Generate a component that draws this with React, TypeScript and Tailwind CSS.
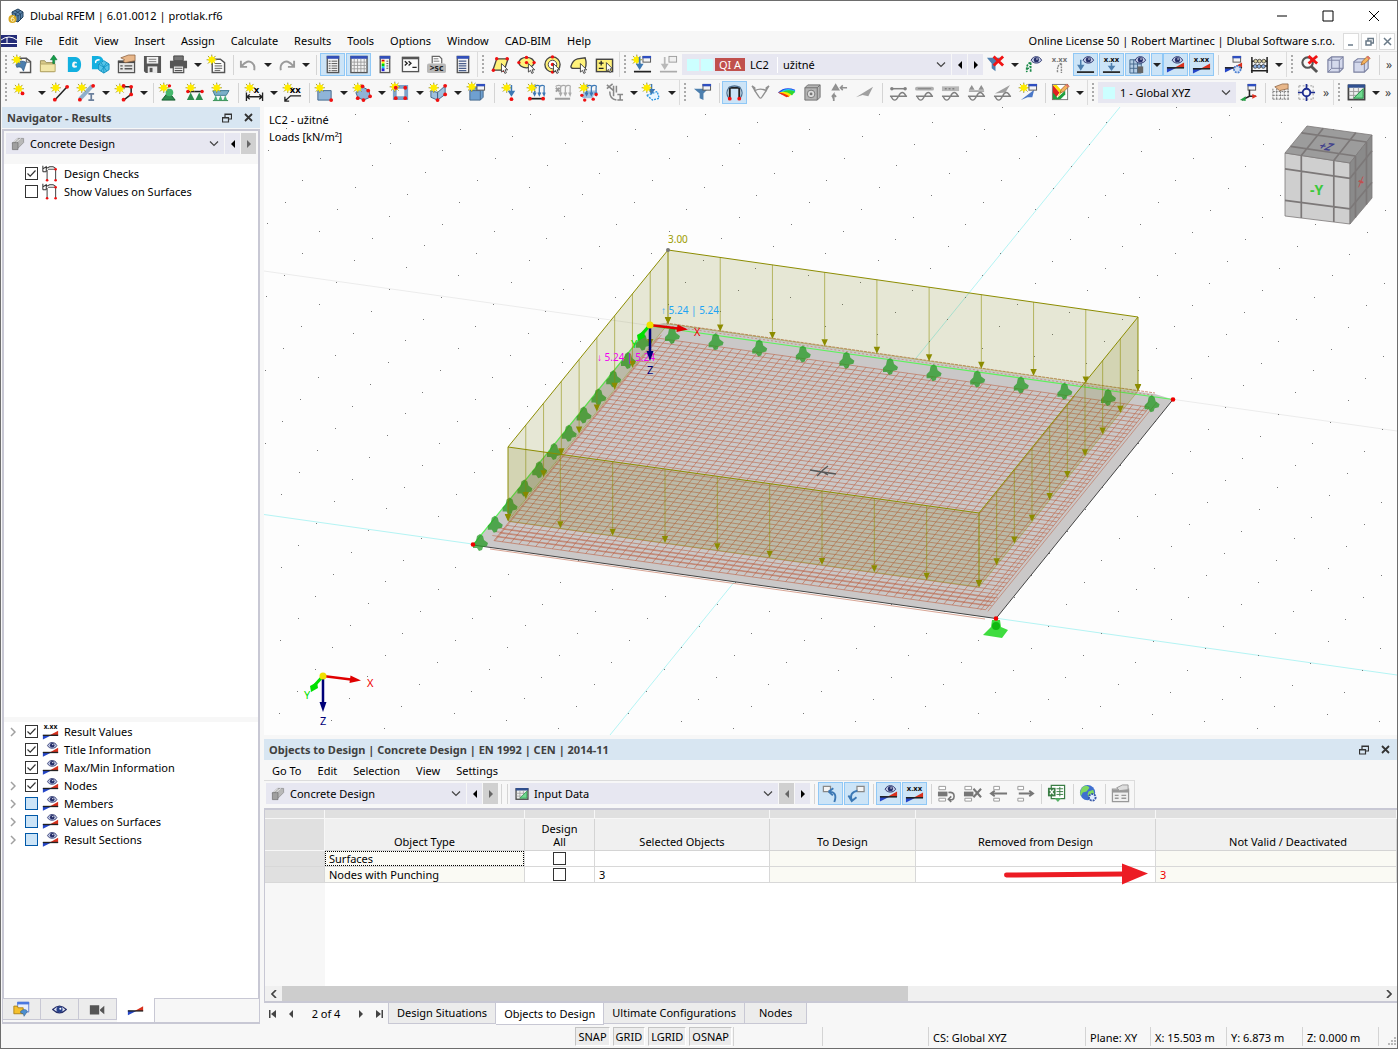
import { useState } from 'react';
import type { ReactNode } from 'react';

/* ---------- icon fragments, all on a 20x20 grid ---------- */

const Star = ({ x = 5, y = 5 }: { x?: number; y?: number }) => (
  <g transform={`translate(${x} ${y})`}>
    <path d="M0-5.4V5.4M-5.4 0H5.4M-4-4L4 4M-4 4L4-4" stroke="#8a8540" strokeWidth="1" />
    <path d="M0-4.6L1.3-2.6 3.6-3.4 2.8-1.2 4.8 0 2.8 1.2 3.6 3.4 1.3 2.6 0 4.6-1.3 2.6-3.6 3.4-2.8 1.2-4.8 0-2.8-1.2-3.6-3.4-1.3-2.6Z" fill="#ffec00" />
  </g>
);

const Dots = ({ at, r = 1.8 }: { at: number[][]; r?: number }) => (
  <g fill="#f01010">{at.map(([x, y], i) => <circle key={i} cx={x} cy={y} r={r} />)}</g>
);

const Eye = ({ x = 13, y = 5 }: { x?: number; y?: number }) => (
  <g transform={`translate(${x} ${y})`}>
    <path d="M-5.5 0.5C-3.5-4.5 3.5-4.5 5.5 .5 3.5 4.5-3.5 4.5-5.5 .5Z" fill="#c3cbe6" stroke="#27306a" strokeWidth="1" />
    <circle r="2.7" fill="#27306a" />
    <circle cx=".7" cy="-.8" r=".8" fill="#fff" />
  </g>
);

const Win = ({ x = 10, y = 1 }: { x?: number; y?: number }) => (
  <g>
    <rect x={x + 0.5} y={y + 0.5} width="8" height="6" fill="#f4f4f4" stroke="#555" />
    <rect x={x} y={y} width="9" height="2.5" fill="#2f4fc0" />
  </g>
);

const Digits = ({ color = '#111' }: { color?: string }) => (
  <text x="10" y="7" textAnchor="middle" fontSize="8" fontWeight="700" fontFamily="'Noto Sans', sans-serif" fill={color}>x.xx</text>
);

const Diagram = () => (
  <g>
    <path d="M1 18.5V13L11 13.5Z" fill="#2446c8" />
    <path d="M9 13.5L19 8V13.5Z" fill="#d8301c" />
    <path d="M1 13.5H19" stroke="#222" strokeWidth="1.6" />
  </g>
);

const Cursor = ({ x = 12, y = 9 }: { x?: number; y?: number }) => (
  <path transform={`translate(${x} ${y})`} d="M0 0V9L2.2 7.2 3.6 10.4 5.2 9.6 3.8 6.6H6.6Z" fill="#fff" stroke="#333" strokeWidth=".9" />
);

const Panel = ({ children, w = 12 }: { children?: ReactNode; w?: number }) => (
  <g>
    <rect x={10.5 - w / 2} y="1.5" width={w} height="17" fill="#f2f2f2" stroke="#555" strokeWidth="1.4" />
    <rect x={10 - w / 2} y="1" width={w + 1} height="3" fill="#3350b8" />
    {children}
  </g>
);

const Loads = ({ c = '#3c78b4' }: { c?: string }) => (
  <path d="M3 4Q3 2.5 6 2.5T8 5V12M8 5Q8 2.5 11 2.5T13 5V12M13 5Q13 2.5 16 2.5T18 5V12M6.5 10L8 13 9.5 10M11.5 10L13 13 14.5 10M16.5 10L18 13 19 10" fill="none" stroke={c} strokeWidth="1.3" />
);

const Pencil = () => (
  <g>
    <path d="M9.5 10.5L11 6.5 16.5 1 19 3.5 13.5 9Z" fill="#f4b35c" stroke="#a0612a" strokeWidth=".8" />
    <path d="M16.5 1L19 3.5 17.8 4.7 15.3 2.2Z" fill="#e07070" />
  </g>
);

const Wave = ({ y = 14 }: { y?: number }) => (
  <path d={`M1 ${y}H19M2 ${y}Q6 ${y + 8} 10 ${y}T18 ${y}`} fill="none" stroke="#808080" strokeWidth="1.5" />
);

const Chip = () => (
  <g>
    <path d="M2 2.5H9V6H2Z" fill="#fff" stroke="#999" />
    <path d="M1 8H11V13H1Z" fill="#777" />
    <path d="M2 15H9V18H2Z" fill="#fff" stroke="#999" />
  </g>
);

const icons: Record<string, ReactNode> = {
  new: <><path d="M5.5 3.5H14L18.5 7V18.5H7" fill="#fff" stroke="#555" strokeWidth="1.5" /><path d="M14 3V7.5H18.5" fill="none" stroke="#555" /><path d="M3 10Q9 4 14 8L11 17Q9 11 4 13Z" fill="#4d7fae" stroke="#2a5580" strokeWidth=".7" /><Star x={4} y={5} /></>,
  open: <><path d="M1.5 17.5V6H6L7.5 8H16V17.5Z" fill="#d9c98a" stroke="#9a8f5c" /><path d="M1.5 17.5V9.5H17V17.5Z" fill="#f2e6a8" stroke="#b5a768" /><path d="M14.5 9V5H12L15.5 0 19 5H16.5V9Z" fill="#11a04a" stroke="#0a6b30" strokeWidth=".6" /></>,
  cloud: <path d="M3 2H11C19 2 19 18 11 18H3ZM12.5 7.5Q8 5.5 7.5 10T12.5 13V11Q10 12 10 10T12.5 9Z" fill="#12b0e0" fillRule="evenodd" />,
  cloudModel: <><path d="M1 1H7C11 1 13 4 13 6L8 9V15H1Z" fill="#12b0e0" /><path d="M5 8.5Q4 5 9 5" stroke="#fff" strokeWidth="1.6" fill="none" /><path d="M8 9.5L13.5 6 19 9.5V15.5L13.5 19 8 15.5Z" fill="#56c4e8" stroke="#0b8fc0" /><path d="M8 9.5L13.5 13 19 9.5M13.5 13V19M10.5 8L16.5 17M16.5 8L10.5 17" stroke="#0b8fc0" fill="none" strokeWidth=".8" /></>,
  props: <><path d="M1.5 6.5H18.5V18.5H1.5Z" fill="#e4e4e4" stroke="#555" strokeWidth="1.3" /><path d="M1 6H19V8.5H1Z" fill="#4a4a4a" /><path d="M3.5 11.5H6M8 11.5H16M3.5 14.5H6M8 14.5H16" stroke="#555" strokeWidth="1.4" /><path d="M4 3L12 0H19V6L9 8Q5 7 8 5Z" fill="#e8b78a" stroke="#8a6040" strokeWidth=".8" /></>,
  save: <><path d="M1 1H19V19H3L1 17Z" fill="#555" /><path d="M4 2H16V9H4Z" fill="#f2f2f2" /><path d="M6 4.5H14M6 7H14" stroke="#777" /><path d="M5 12H15V19H5Z" fill="#e8e8e8" /><path d="M7 13.5H10V18H7Z" fill="#555" /></>,
  print: <><path d="M5 1H15V6H5Z" fill="#777" stroke="#444" /><path d="M1 6H19V14H1Z" fill="#555" /><path d="M4.5 11.5H15.5V18.5H4.5Z" fill="#f0f0f0" stroke="#555" strokeWidth="1.3" /><path d="M6 14H14M6 16.5H14" stroke="#555" strokeWidth="1.2" /></>,
  report: <><path d="M5.5 4.5H14L18.5 8V18.5H5.5Z" fill="#fff" stroke="#555" strokeWidth="1.5" /><path d="M8 9H15M8 11.5H16M8 14H16M8 16.2H14" stroke="#555" /><Star x={5} y={5} /></>,
  undo: <path d="M2 6V12.5H8.5M2.5 12Q9 4 14 8.5 17 11 16 16" fill="none" stroke="#9a9a9a" strokeWidth="2" />,
  redo: <path d="M18 6V12.5H11.5M17.5 12Q11 4 6 8.5 3 11 4 16" fill="none" stroke="#9a9a9a" strokeWidth="2" />,
  navPanel: <Panel><path d="M9 6.5H15M9 9H15M9 11.5H15M9 14H15M9 16.5H15M6 6.5H8M6 9H8M6 11.5H8M6 14H8M6 16.5H8" stroke="#555" /></Panel>,
  tablePanel: <Panel w={17}><path d="M5.5 4V18M9 4V18M12.5 4V18M16 4V18M2 7.5H19M2 11H19M2 14.5H19" stroke="#999" strokeWidth=".9" /></Panel>,
  colorPanel: <Panel w={10}><path d="M7 5H10V7H7Z" fill="#d00" /><path d="M7 7H10V9H7Z" fill="#ff0" /><path d="M7 9H10V12H7Z" fill="#0c0" /><path d="M7 12H10V14H7Z" fill="#0cf" /><path d="M7 14H10V17H7Z" fill="#22d" /><path d="M12 6.5H14M12 9H14M12 11.5H14M12 14H14" stroke="#555" /></Panel>,
  console: <><rect x="1.5" y="2.5" width="17" height="15" fill="#fafafa" stroke="#555" strokeWidth="1.4" /><path d="M1 2H19V4.5H1Z" fill="#555" /><path d="M4 6.5L6.5 8.8 4 11M8 6.5L10.5 8.8 8 11M12 13H16.5" fill="none" stroke="#222" strokeWidth="1.4" /></>,
  script: <><path d="M5.5 9V1.5H13L15.5 4V9" fill="#fff" stroke="#666" strokeWidth="1.3" /><path d="M7 4H12M7 6.5H13" stroke="#777" /><rect y="9" width="20" height="10" rx="2" fill="#b8b8b8" /><text x="10" y="17" textAnchor="middle" fontSize="9" fontWeight="700" fontFamily="'Noto Sans', sans-serif" fill="#222">&gt;sc</text></>,
  listPanel: <Panel><path d="M6 6.5H14M6 9H14M6 11.5H14M6 14H14M6 16.5H14" stroke="#4a5f8c" strokeWidth="1.3" /></Panel>,
  selRhomb: <><path d="M6 4H18L14 16H2Z" fill="#fff27a" stroke="#444" strokeWidth="1.4" /><Dots at={[[6, 4], [17, 4], [2.5, 16], [13, 16]]} /><Cursor x={11} /></>,
  selEllipse: <><ellipse cx="10" cy="8" rx="8" ry="5.5" fill="#fff27a" stroke="#444" strokeWidth="1.4" /><Dots at={[[2, 8], [10, 2.5], [10, 8], [18, 8]]} /><Cursor x={12} /></>,
  selRing: <><circle cx="10" cy="10" r="8" fill="#fff27a" stroke="#444" strokeWidth="1.4" /><circle cx="10" cy="10" r="4.5" fill="#fff" stroke="#444" /><Dots at={[[10, 10], [10, 2], [10, 18]]} /><Cursor x={11} /></>,
  selFree: <><path d="M2 12Q4 5 9 4L17 3Q19 9 17 14H5Q2 14 2 12Z" fill="#fff27a" stroke="#444" strokeWidth="1.4" /><Cursor x={12} /></>,
  selBox: <><rect x="1.5" y="4.5" width="17" height="13" fill="#fff27a" stroke="#444" strokeWidth="1.5" /><path d="M4 8.5H9M6.5 6V11M4 14H9" stroke="#222" strokeWidth="1.3" /><Cursor x={12} y={8} /></>,
  lcNew: <><Star x={4} y={5} /><path d="M7 2V13M4.5 10L7 14 9.5 10Z" fill="#3c78b4" stroke="#3c78b4" strokeWidth="1.8" /><Win /><path d="M1 17.5H19" stroke="#222" strokeWidth="1.8" /></>,
  lcOld: <g opacity=".8"><path d="M6 2V13M3.5 10L6 14 8.5 10Z" fill="#aaa" stroke="#aaa" strokeWidth="1.8" /><rect x="10.5" y="1.5" width="8" height="6" fill="#eee" stroke="#888" /><path d="M1 17.5H19" stroke="#999" strokeWidth="1.8" /></g>,
  filterX: <><path d="M1 3H15L10 9V17L6 14V9Z" fill="#4d7fae" /><path d="M8 1.5L18 11M18 1.5L8 11" stroke="#f01414" strokeWidth="3" /></>,
  eyeLoad: <><path d="M7 8Q2 9 3 18M7 8V18M3 15L7 12" fill="none" stroke="#1c8a4a" strokeWidth="1.8" strokeDasharray="2.5 1" /><Eye x={13} y={5} /></>,
  digitsGray: <><Digits color="#777" /><path d="M12 9Q7 10 8 19M12 9V19" fill="none" stroke="#888" strokeWidth="1.5" strokeDasharray="2 1" /></>,
  loadEye: <><path d="M5 5V14M2.5 11L5 15 7.5 11Z" fill="#4d7fae" stroke="#4d7fae" strokeWidth="1.6" /><Eye x={13} y={5} /><path d="M1 18H19" stroke="#222" strokeWidth="1.8" /></>,
  loadDigits: <><Digits /><path d="M10 8.5V14M7.5 12L10 15.500 12.5 12Z" fill="#4d7fae" stroke="#4d7fae" strokeWidth="1.6" /><path d="M1 18H19" stroke="#222" strokeWidth="1.8" /></>,
  meshEye: <><path d="M2 5H14V19H2Z" fill="#b4cce4" stroke="#44688c" /><path d="M6 5V19M10 5V19M2 9.5H14M2 14H14" stroke="#44688c" /><path d="M10 12H16V19H10Z" fill="#666" /><Eye x={13} y={5} /></>,
  resEye: <><Diagram /><Eye x={12} y={5} /></>,
  resDigits: <><Digits /><g transform="translate(0 1)"><Diagram /></g></>,
  res: <g transform="translate(0 -3)"><Diagram /></g>,
  resSet: <><Diagram /><Win x={9} /><circle cx="14" cy="15" r="3.5" fill="#cfe0f6" stroke="#4d7fd0" strokeWidth="1.8" strokeDasharray="2 1" /></>,
  abacus: <><path d="M2 2V19M18 2V19M2 6.5H18M2 11.5H18M1 16.5H19" stroke="#222" strokeWidth="1.6" /><g fill="#d8cfa0" stroke="#333" strokeWidth=".8"><circle cx="6" cy="6.5" r="2" /><circle cx="10" cy="6.5" r="2" /><circle cx="14.5" cy="6.5" r="2" /></g><g fill="#8db2e8" stroke="#333" strokeWidth=".8"><circle cx="5.5" cy="12" r="2" /><circle cx="9.5" cy="12" r="2" /><circle cx="14" cy="12" r="2" /></g></>,
  searchX: <><circle cx="8" cy="8" r="5.5" fill="none" stroke="#555" strokeWidth="2.2" /><path d="M12 12L18 18" stroke="#555" strokeWidth="3" /><path d="M9 1L18 9M18 1L9 9" stroke="#f01414" strokeWidth="3" /></>,
  cube: <><path d="M2 5L6 2H18V14L14 18H2Z" fill="#d4d9ec" stroke="#7a80a0" strokeWidth="1.2" /><path d="M2 5.5H14V18M14 5.5L18 2M6 2V14H18M6 14L2 18" fill="none" stroke="#7a80a0" /></>,
  cubeEdit: <><path d="M2 7L6 4H17V14L13 18H2Z" fill="#d4d9ec" stroke="#7a80a0" strokeWidth="1.2" /><path d="M2 7.5H13V18M13 7.5L17 4" fill="none" stroke="#7a80a0" /><Pencil /></>,
  node: <><Star x={6} y={6} /><Dots at={[[10, 11]]} r={2} /></>,
  line: <><Star x={5} y={5} /><path d="M4 18L17 4" stroke="#222" strokeWidth="1.6" /><Dots at={[[17, 4], [4, 17.5]]} r={2} /></>,
  member: <><path d="M3 17L16 3" stroke="#8fb0cc" strokeWidth="4" /><Star x={5} y={5} /><Dots at={[[17, 3], [3, 17.5]]} r={2} /><path d="M12 11.5H18M12 18H18M15 11.5V18" stroke="#6a7f9c" strokeWidth="1.8" /></>,
  poly: <><path d="M5 4H17V12L9 18" fill="none" stroke="#222" strokeWidth="1.6" /><Star x={5} y={6} /><Dots at={[[9, 3], [17, 4], [17, 12], [9, 17.5]]} r={2} /></>,
  support: <><path d="M10 9L17 18H3Z" fill="#2d8c4e" stroke="#145c2c" /><circle cx="11" cy="10" r="4" fill="#45b86c" /><Star x={5} y={5} /><Dots at={[[11, 3]]} /></>,
  lineSup: <><path d="M3 9H18" stroke="#222" strokeWidth="1.6" /><path d="M6 10L10 18H2ZM15 10L19 18H11Z" fill="#2d8c4e" /><Star x={6} y={5} /><Dots at={[[3, 9], [18, 9]]} /></>,
  surfSup: <><path d="M2 8H19L16 13H4Z" fill="#7ab0c8" stroke="#3d7890" /><path d="M3 18L5 13 7 18ZM8 18L10 13 12 18ZM13 18L15 13 17 18Z" fill="#48b078" /><path d="M2 18.5H18" stroke="#2d8c4e" /><Star x={6} y={5} /></>,
  dim: <><path d="M1.5 10V19M18.5 10V19M2 14.5H18M5 12L2 14.5 5 17M15 12L18 14.5 15 17" fill="none" stroke="#222" strokeWidth="1.4" /><Star x={5} y={5} /><text x="12" y="11" textAnchor="middle" fontSize="10" fontWeight="700" fontFamily="'Noto Sans', sans-serif">x</text></>,
  dimXX: <><path d="M2 19L8 13.5H19M2 14.5V19H6.5" fill="none" stroke="#222" strokeWidth="1.4" /><Star x={5} y={5} /><text x="13" y="11" textAnchor="middle" fontSize="10" fontWeight="700" fontFamily="'Noto Sans', sans-serif">xx</text></>,
  surface: <><path d="M3 8H17V18H3Z" fill="#8fb4d8" stroke="#44688c" /><Star x={5} y={5} /><Dots at={[[17, 18]]} r={2} /></>,
  shell: <><path d="M3 10L10 4 17 8 18 15 11 18 5 15Z" fill="#8fb4d8" stroke="#44688c" /><Star x={5} y={5} /><Dots at={[[10, 3.5], [18, 14], [11, 18], [5, 16], [16, 8]]} r={2} /></>,
  opening: <><path d="M4 4H16V16H4Z" fill="none" stroke="#7da4cc" strokeWidth="4" /><Star x={4} y={4} /><Dots at={[[5, 5], [15, 5], [5, 16], [15, 16]]} r={2} /></>,
  solid: <><path d="M2 8L9 10V18L2 15ZM9 10L17 3V12L9 18Z" fill="#9fc0de" stroke="#44688c" /><Star x={5} y={5} /><Dots at={[[17, 3], [17, 12], [9, 18]]} r={2} /></>,
  solidWin: <><path d="M3 8L6 5H17V15L14 18H3Z" fill="#6fa0d0" stroke="#44688c" /><path d="M3 8H14V18" fill="none" stroke="#44688c" /><Star x={5} y={4} /><Win x={10} /></>,
  nodalLoad: <><Star x={6} y={5} /><path d="M11 2V12M8.5 9L11 13 13.5 9Z" fill="#3c78b4" stroke="#3c78b4" strokeWidth="1.6" /><Dots at={[[11, 17]]} r={2} /></>,
  lineLoad: <><Loads /><Star x={5} y={5} /><path d="M3 16.5H17" stroke="#222" strokeWidth="1.8" /><Dots at={[[3, 16.5], [17, 16.5]]} r={2} /></>,
  memberLoad: <g opacity=".8"><Loads c="#999" /><path d="M3 5L7 9M7 5L3 9M2 16.5H18" stroke="#888" strokeWidth="2" /></g>,
  surfLoad: <><path d="M2 13L8 8H18L14 16H4Z" fill="#9fc0de" /><Loads /><Star x={5} y={5} /><Dots at={[[3, 13], [6, 18], [18, 12], [15, 17]]} /></>,
  solidLoad: <><path d="M2 2L9 8M2 6L8 1M5 9Q5 17 12 18M9 3V14M12 3V10" fill="none" stroke="#888" strokeWidth="1.6" /><path d="M13 12H19M13 18H19M16 12V18" stroke="#888" strokeWidth="1.6" /></>,
  freeLoad: <><path d="M4 13L10 18 17 16 15 9Z" fill="#e8f6ff" stroke="#2a94e0" strokeDasharray="2 1.2" strokeWidth="1.4" /><path d="M9 1V9M6.5 7L9 11 11.5 7Z" fill="#3c78b4" stroke="#3c78b4" strokeWidth="1.5" /><Star x={4} y={5} /></>,
  filterWin: <><path d="M1 6H16L11 11V18L7 16V11Z" fill="#4d7fae" /><Win x={10} /></>,
  frame: <><path d="M5 17V5H15V17" fill="none" stroke="#222" strokeWidth="2" /><path d="M4 16Q0 10 4 5Q10 1 16 5Q20 10 16 16" fill="none" stroke="#4d6f90" strokeWidth="1.2" /><Dots at={[[5, 16.5], [15, 16.5]]} r={2} /></>,
  moment: <path d="M1 3Q3 6 4 8L8 14Q10 18 12 14L16 8Q17 6 19 3M1 3L4 5V9M19 3L16 5V9M4 8Q10 5 16 8" fill="none" stroke="#909090" strokeWidth="1.4" />,
  rainbow: <><path d="M1 10Q8 3 19 7V9Q9 6 5 12Z" fill="#2244ee" /><path d="M3 10Q10 4 19 8V10L8 13Z" fill="#20c8f0" /><path d="M5 10Q11 6 19 9L16 13 10 12Z" fill="#30d830" /><path d="M2 10Q9 8 15 12L12 15Z" fill="#ffe000" /><path d="M1 10Q7 10 13 14L10 15Z" fill="#f03010" /></>,
  solidRes: <><path d="M2 5L5 2H18V15L15 18H2Z" fill="#b4b4b4" stroke="#707070" /><path d="M2 5H15V18M15 5L18 2" fill="none" stroke="#707070" /><circle cx="8.5" cy="11.5" r="4" fill="#ddd" stroke="#777" /><circle cx="8.5" cy="11.5" r="1.5" fill="#777" /></>,
  reactions: <><path d="M7 2L10 7H4ZM5 19V12L3 14.5M5 12L7.5 14.5" fill="#999" stroke="#909090" strokeWidth="1.8" /><path d="M19 5H12M14.5 2.5L12 5 14.5 7.5" fill="none" stroke="#909090" strokeWidth="1.6" /></>,
  plane: <path d="M1 15L19 4 14 14 8 12.5Z" fill="#a0a0a0" />,
  wave1: <><path d="M3 6H17" stroke="#808080" strokeWidth="1.6" /><g fill="#808080"><circle cx="3" cy="6" r="1.8" /><circle cx="17" cy="6" r="1.8" /></g><Wave /></>,
  wave2: <><path d="M2 6H18" stroke="#b0b0b0" strokeWidth="4" strokeLinecap="round" /><path d="M3 6H17" stroke="#808080" /><Wave /></>,
  wave3: <><path d="M1 6H19" stroke="#b8b8b8" strokeWidth="5" /><path d="M4 6H16" stroke="#808080" strokeWidth="1.5" strokeDasharray="2 2" /><Wave /></>,
  wave4: <><path d="M5 2L8 7H2ZM15 2L18 7H12Z" fill="#909090" /><path d="M2 8.5H18" stroke="#909090" strokeWidth="1.4" /><Wave /></>,
  wave5: <><path d="M2 11L18 2 13 10Z" fill="#a0a0a0" /><Wave /></>,
  planeWin: <><path d="M2 18L16 7 14 15 9 15Z" fill="#4a78c8" /><Star x={5} y={5} /><Win x={10} /></>,
  colors: <><rect x="1.5" y="1.5" width="16" height="16" fill="#fff" stroke="#777" /><path d="M2 2L9 10 4 17H2Z" fill="#e02020" /><path d="M2 10L8 17H2Z" fill="#20a040" /><path d="M2 2H6L12 9 7 15 9 10Z" fill="#ffe000" /><path d="M5 17L15 8V12L10 17Z" fill="#20a040" /><Pencil /></>,
  axes: <><Win x={9} /><path d="M11 7V14H18M11 14L3 18" fill="none" stroke="#222" strokeWidth="1.6" /><path d="M14 11.5L19 14 14 16.5Z" fill="#e03020" /><path d="M7 14L1 18 7 19Z" fill="#20a040" /></>,
  gridHand: <><path d="M2 6V18M6 6V18M10 6V18M14 6V18M18 6V18M2 9H19M2 13H19M2 17H19" stroke="#777" strokeDasharray="2 1" /><path d="M4 4L12 1H18V6L9 8Z" fill="#e8b78a" stroke="#8a6040" strokeWidth=".8" /></>,
  snap: <><path d="M2 3V17M17 3V17M2 3H17M2 17H17" stroke="#999" strokeDasharray="2 2" /><path d="M10 1V19M1 10H19" stroke="#1c2c90" strokeWidth="1.8" /><circle cx="10" cy="10" r="4" fill="#f7f7f7" stroke="#1c2c90" strokeWidth="2" /></>,
  tableGreen: <><rect x="1.5" y="2.5" width="17" height="15" fill="#eee" stroke="#444" strokeWidth="1.8" /><path d="M1 1.5H19V5H1Z" fill="#2f4f90" /><path d="M2 9H18M2 13H18M7 5V17M12 5V17" stroke="#999" /><path d="M17 6V16H7Z" fill="#70d890" stroke="#209040" /></>,
  beam: <><path d="M2 9L9 2H18V8L10 16" fill="#b8b8b8" stroke="#888" /><path d="M2 8H10V18H2Z" fill="#a0a0a0" stroke="#707070" /><path d="M4 7L10 2M8 7L14 2" stroke="#e8e8e8" strokeWidth="1.2" /></>,
  check: <><path d="M6 6V18M16 4V18M7 5H16" fill="none" stroke="#555" strokeWidth="1.3" /><path d="M1 1V8M1 4.5L5 2V8M5 4L9 2H13L16 4M1 8H5" fill="none" stroke="#333" strokeWidth="1.2" /><Dots at={[[6, 18], [16, 18], [16, 5]]} r={1.5} /></>,
  syncIn: <><path d="M2.5 2.5H10V8H2.5Z" fill="#f4f4f4" stroke="#888" strokeWidth="1.3" /><path d="M8 8Q18 8 14 19M8 8L13 4.5M8 8L12.5 12" fill="none" stroke="#3c78b4" strokeWidth="2" /></>,
  syncOut: <><path d="M10.5 2.5H18V8H10.5Z" fill="#f4f4f4" stroke="#888" strokeWidth="1.3" /><path d="M11 7Q2 9 5 17M1.5 12L5 18 10 14" fill="none" stroke="#3c78b4" strokeWidth="2" /></>,
  rowUndo: <><Chip /><path d="M12 9Q18 8 18 13T12 16M15 13L12 16 15 19" fill="none" stroke="#777" strokeWidth="1.7" /></>,
  rowDel: <><Chip /><path d="M11 5L19 14M19 5L11 14" stroke="#777" strokeWidth="2.2" /></>,
  rowIn: <><path d="M5 2.5H11V6H5ZM5 15H11V18H5Z" fill="#fff" stroke="#999" /><path d="M2 10H19M6 7L2 10 6 13" fill="none" stroke="#777" strokeWidth="2" /></>,
  rowOut: <><path d="M3 2.5H9V6H3ZM3 15H9V18H3Z" fill="#fff" stroke="#999" /><path d="M4 10H19M15 7L19 10 15 13" fill="none" stroke="#777" strokeWidth="2" /></>,
  excel: <><path d="M4.5 1.5H18.5V15.5H4.5Z" fill="#fff" stroke="#3a7d44" strokeWidth="1.3" /><path d="M10 5H17M10 8H17M10 11H17M13.5 3V13" stroke="#3a7d44" /><path d="M1 4H9V13H1Z" fill="#3a7d44" /><path d="M3 6L7 11M7 6L3 11" stroke="#fff" strokeWidth="1.4" /><path d="M8 15H15L11.5 19Z" fill="#58b368" /></>,
  globe: <><circle cx="9" cy="9" r="8" fill="#3f6fd0" /><path d="M4 3Q9 0 11 4L8 8 4 9 2 13Q0 8 4 3ZM10 8L15 6 16 10 11 15 9 11Z" fill="#7fd860" /><circle cx="14" cy="14" r="3.5" fill="#e0ecff" stroke="#3858a8" strokeWidth="2" strokeDasharray="2 1" /></>,
  propsGray: <><path d="M1.5 5.5H18.5V18.5H1.5Z" fill="#f0f0f0" stroke="#999" strokeWidth="1.3" /><path d="M1 6H19V9H1Z" fill="#999" /><path d="M4 12H8M11 12H16M4 15H8M11 15H16" stroke="#999" strokeWidth="1.4" /><path d="M6 4L12 1H18V6L9 7Z" fill="#ddd" stroke="#999" /></>,
  project: <><path d="M5.5 1.5H18.5V13H5.5Z" fill="#e8eefc" stroke="#5577cc" /><path d="M5 1H19V4H5Z" fill="#4a78e0" /><path d="M1 6H5L6 8H12V15H1Z" fill="#f5c02c" stroke="#a87d10" /><path d="M9 12Q14 8 17 12L13 18Q13 14 9 14Z" fill="#4d8fd0" stroke="#2a5580" strokeWidth=".6" /></>,
  eyeTab: <g transform="translate(10 10)"><path d="M-8 0Q0-8 8 0Q0 8-8 0Z" fill="#dfe4f4" stroke="#27306a" strokeWidth="1.3" /><circle r="3.6" fill="#27408a" /><circle cx="1" cy="-1" r="1.2" fill="#fff" /></g>,
  camera: <path d="M1 5H12V16H1ZM13 10L18 5.5V15.5L13 11.5Z" fill="#555" />,
};

const Icon = ({ name, size = 'h-5 w-5' }: { name: string; size?: string }) => (
  <svg viewBox="0 0 20 20" className={`${size} shrink-0 overflow-visible`} aria-hidden="true">{icons[name]}</svg>
);

/* ---------- toolbar ---------- */

// '|' separator, '||' wide separator, '::' group boundary, 'v' caret, '*' prefix = pressed
function Tools({ items }: { items: string[] }) {
  return (
    <>
      {items.map((it, i) => {
        if (it === '|' || it === '||') {
          return <span key={i} className={`${it === '|' ? 'w-[6px]' : 'w-2'} flex shrink-0 justify-center`}><span className="h-5 w-px bg-[#d4d4d4]" /></span>;
        }
        if (it === '::') {
          return (
            <span key={i} className="flex w-3 shrink-0 items-center justify-between self-stretch pr-1 pl-px">
              <span className="w-px self-stretch bg-[#dcdcdc]" />
              <Grip />
            </span>
          );
        }
        const on = it[0] === '*';
        const name = on ? it.slice(1) : it;
        const tone = on ? 'border-[#90c8f6] bg-[#cce4f7]' : 'border-transparent hover:bg-[#dceaf6]';
        if (name === 'v') {
          return (
            <button key={i} aria-label="More options" className={`flex h-[23px] w-3 shrink-0 items-center justify-center border ${tone}`}>
              <svg viewBox="0 0 8 4" className="h-1 w-2 shrink-0"><path d="M0 0H8L4 4Z" fill="#222" /></svg>
            </button>
          );
        }
        return (
          <button key={i} aria-label={name} className={`mr-px flex h-[23px] w-[25px] shrink-0 items-center justify-center border ${tone}`}>
            <Icon name={name} size="h-[19px] w-[19px]" />
          </button>
        );
      })}
    </>
  );
}

const Grip = () => (
  <svg viewBox="0 0 2 20" className="h-5 w-[2px] shrink-0"><path d="M1 0V20" stroke="#aaa" strokeWidth="2" strokeDasharray="2 2" /></svg>
);

const Overflow = () => <button aria-label="Overflow" className="w-3 shrink-0 text-center text-xs text-[#444]">»</button>;

const Chevron = () => (
  <svg viewBox="0 0 10 6" className="pointer-events-none absolute right-[5px] h-[6px] w-[10px]"><path d="M1 .5L5 4.5 9 .5" fill="none" stroke="#444" strokeWidth="1.2" /></svg>
);

function Combo({ label, value, width, lead }: { label: string; value: string; width: string; lead: ReactNode }) {
  return (
    <div className={`${width} relative flex h-[21px] shrink-0 items-center gap-[5px] bg-[#e7e7f1] pl-[5px]`}>
      {lead}
      <select aria-label={label} className="h-full min-w-0 flex-1 appearance-none bg-transparent outline-none">
        <option>{value}</option>
      </select>
      <Chevron />
    </div>
  );
}

function Step({ dir, off }: { dir: 'left' | 'right'; off?: boolean }) {
  return (
    <button aria-label={dir === 'left' ? 'Previous' : 'Next'} disabled={off} className={`ml-px flex h-[21px] w-[15px] shrink-0 items-center justify-center ${off ? 'bg-[#d0d0d0]' : 'bg-[#e7e7f1]'}`}>
      <svg viewBox="0 0 4 8" className="h-2 w-1"><path d={dir === 'left' ? 'M4 0V8L0 4Z' : 'M0 0V8L4 4Z'} fill={off ? '#666' : '#000'} /></svg>
    </button>
  );
}

const menus = ['File', 'Edit', 'View', 'Insert', 'Assign', 'Calculate', 'Results', 'Tools', 'Options', 'Window', 'CAD-BIM', 'Help'];

function TitleBar() {
  return (
    <header className="flex h-[30px] shrink-0 items-center bg-white pl-[7px]">
      <svg viewBox="0 0 16 16" className="h-4 w-4">
        <path d="M4 4L10 1 15 4V9L10 14 5 12Z" fill="#5a82aa" stroke="#20405c" />
        <path d="M4 4L10 8 15 4M10 8V14M7 2.5L12.5 6M12.5 2.5L7 6M7.500 6V13M12.500 6V11.500" fill="none" stroke="#20405c" strokeWidth=".8" />
        <circle cx="4.5" cy="11" r="4" fill="#d8a820" /><path d="M6 8.500Q3 9 3 11.500" fill="none" stroke="#fff3c0" /><circle cx="4.700" cy="11.800" r="1.500" fill="none" stroke="#fff3c0" />
      </svg>
      <h1 className="ml-[6px] flex-1">Dlubal RFEM | 6.01.0012 | protlak.rf6</h1>
      {['M1 6H11', 'M1 1H11V11H1Z', 'M1 1L11 11M11 1L1 11'].map((d, i) => (
        <button key={d} aria-label={['Minimize', 'Maximize', 'Close'][i]} className="flex h-full w-[46px] items-center justify-center">
          <svg viewBox="0 0 12 12" className="h-3 w-3"><path d={d} fill="none" stroke="#000" /></svg>
        </button>
      ))}
    </header>
  );
}

function MenuBar() {
  return (
    <nav className="flex h-5 shrink-0 items-center">
      <svg viewBox="0 0 16 12" className="h-3 w-4"><rect width="16" height="12" fill="#242c78" /><path d="M0 5Q8-1 16 5M0 8.5H16M6 2V9" fill="none" stroke="#fff" strokeWidth="1" /></svg>
      <div className="flex flex-1 gap-4 pl-2">
        {menus.map(m => <button key={m}>{m}</button>)}
      </div>
      <span className="mr-2">Online License 50 | Robert Martinec | Dlubal Software s.r.o.</span>
      {['M1 8H6', 'M1 4H6V8H1ZM3 4V1.5H8.5V6H6', 'M1 1L8 8M8 1L1 8'].map((d, i) => (
        <button key={d} aria-label={['Minimize view', 'Restore view', 'Close view'][i]} className="mr-[2px] flex h-[17px] w-4 items-center justify-center border border-[#dcdcdc] bg-white">
          <svg viewBox="0 0 9 9" className="h-[9px] w-[9px]"><path d={d} fill="none" stroke="#6a7a88" strokeWidth="1.5" /></svg>
        </button>
      ))}
    </nav>
  );
}

function Toolbars() {
  return (
    <>
      <div className="flex h-7 shrink-0 items-center overflow-hidden border-t border-[#e0e0e0] pb-[2px] pl-1">
        <span className="mr-[3px]"><Grip /></span>
        <Tools items={['new', 'open', 'cloud', 'cloudModel', 'props', 'save', 'print', 'v', 'report', '|', 'undo', 'v', 'redo', 'v', '||', '*navPanel', '*tablePanel', 'colorPanel', 'console', 'script', 'listPanel', '::', 'selRhomb', 'selEllipse', 'selRing', 'selFree', 'selBox', '::', 'lcNew', 'lcOld']} />
        <Combo label="Load case" value="užitné" width="w-[269px]" lead={
          <>
            <span className="flex gap-[2px]"><i className="h-3 w-3 bg-[#ccffff]" /><i className="h-3 w-3 bg-[#ccffff]" /></span>
            <span className="-ml-[3px] w-[30px] bg-[#c0504d] text-center leading-[13px] text-white">QI A</span>
            <span className="w-[22px]">LC2</span>
            <i className="h-4 w-px bg-white" />
          </>
        } />
        <Step dir="left" />
        <Step dir="right" />
        <Tools items={['filterX', 'v', 'eyeLoad', 'digitsGray', '*loadEye', '*loadDigits', '*meshEye', '*v', '*resEye', '*resDigits', '|', 'resSet', 'abacus', 'v', '::', 'searchX', 'cube', 'cubeEdit', '||']} />
        <Overflow />
      </div>
      <div className="flex h-7 shrink-0 items-center overflow-hidden border-t border-[#e0e0e0] pb-[2px] pl-1">
        <span className="mr-[3px]"><Grip /></span>
        <Tools items={['node', 'v', 'line', 'member', 'v', 'poly', 'v', '|', 'support', 'lineSup', 'surfSup', '||', 'dim', 'v', 'dimXX', '|', 'surface', 'v', 'shell', 'v', 'opening', 'v', 'solid', 'v', 'solidWin', '||', 'nodalLoad', 'lineLoad', 'memberLoad', 'surfLoad', 'solidLoad', 'v', 'freeLoad', 'v', '::', 'filterWin', '|', '*frame', 'moment', 'rainbow', 'solidRes', 'reactions', 'plane', '||', 'wave1', 'wave2', 'wave3', 'wave4', 'wave5', 'planeWin', '|', 'colors', 'v', '::']} />
        <Combo label="Coordinate system" value="1 - Global XYZ" width="w-[138px]" lead={<i className="h-3 w-3 bg-[#ccffff]" />} />
        <Tools items={['axes', '|', 'gridHand', 'snap']} />
        <Overflow />
        <Tools items={['::', 'tableGreen', 'v']} />
        <Overflow />
      </div>
    </>
  );
}

/* ---------- navigator ---------- */

function Tick({ id, checked, mixed, label }: { id: string; checked?: boolean; mixed?: boolean; label?: string }) {
  return (
    <span className="relative inline-flex h-[13px] w-[13px] shrink-0">
      <input id={id} type="checkbox" aria-label={label} defaultChecked={checked} className={`peer h-[13px] w-[13px] appearance-none border ${mixed ? 'border-[#0058a8] bg-[#cce4f7]' : 'border-[#333] bg-white'}`} />
      <svg viewBox="0 0 13 13" className="pointer-events-none absolute inset-0 hidden h-[13px] w-[13px] peer-checked:block"><path d="M2.5 6.5L5.2 9.2 10.5 3.5" fill="none" stroke="#333" strokeWidth="1.2" /></svg>
    </span>
  );
}

function PanelTitle({ title }: { title: string }) {
  return (
    <div className="flex h-[21px] shrink-0 items-center bg-[#d8e6f2] pr-[7px] pl-[5px]">
      <h2 className="flex-1 truncate font-bold text-[#404040]">{title}</h2>
      <button aria-label="Float panel"><svg viewBox="0 0 10 10" className="h-[10px] w-[10px]"><path d="M.5 4.500H6.500V9H.5ZM3 4V1H9.500V6H7M3 1.500H9.500M.5 5H6.500" fill="none" stroke="#333" strokeWidth="1.2" /></svg></button>
      <button aria-label="Close panel" className="ml-3"><svg viewBox="0 0 9 9" className="h-[9px] w-[9px]"><path d="M1 1L8 8M8 1L1 8" stroke="#333" strokeWidth="1.8" /></svg></button>
    </div>
  );
}

interface TreeItem { text: string; icon: string; checked?: boolean; mixed?: boolean; expand?: boolean }

const topItems: TreeItem[] = [
  { text: 'Design Checks', icon: 'check', checked: true },
  { text: 'Show Values on Surfaces', icon: 'check' },
];

const resultItems: TreeItem[] = [
  { text: 'Result Values', icon: 'resDigits', checked: true, expand: true },
  { text: 'Title Information', icon: 'resEye', checked: true },
  { text: 'Max/Min Information', icon: 'resEye', checked: true },
  { text: 'Nodes', icon: 'resEye', checked: true, expand: true },
  { text: 'Members', icon: 'resEye', mixed: true, expand: true },
  { text: 'Values on Surfaces', icon: 'resEye', mixed: true, expand: true },
  { text: 'Result Sections', icon: 'resEye', mixed: true, expand: true },
];

function Tree({ items }: { items: TreeItem[] }) {
  return (
    <ul>
      {items.map(it => (
        <li key={it.text} className="flex h-[18px] items-center pl-[6px]">
          <span className="flex w-[15px] items-center">
            {it.expand && <button aria-label={`Expand ${it.text}`} className="pt-px"><svg viewBox="0 0 6 10" className="h-[10px] w-[6px]"><path d="M1 1L5 5 1 9" fill="none" stroke="#a0a0a0" strokeWidth="1.5" /></svg></button>}
          </span>
          <Tick id={it.text} checked={it.checked} mixed={it.mixed} />
          <label htmlFor={it.text} className="flex items-center gap-[5px] pl-1"><Icon name={it.icon} size="h-[17px] w-[17px]" /><span className="pt-px">{it.text}</span></label>
        </li>
      ))}
    </ul>
  );
}

function Navigator() {
  const [tab, setTab] = useState('res');
  return (
    <aside className="ml-px flex w-[258px] shrink-0 flex-col pb-[2px]">
      <PanelTitle title="Navigator - Results" />
      <div className="mt-px flex flex-1 flex-col border-x-2 border-t-2 border-[#c8c8d4]">
        <div className="flex h-[33px] shrink-0 pt-[2px] pl-[2px]">
          <Combo label="Results category" value="Concrete Design" width="w-[218px]" lead={<Icon name="beam" size="h-[14px] w-[14px]" />} />
          <Step dir="left" />
          <Step dir="right" off />
        </div>
        <div className="flex-1 bg-white"><Tree items={topItems} /></div>
        <div className="mt-[5px] h-[276px] shrink-0 bg-white"><Tree items={resultItems} /></div>
      </div>
      <div className="flex h-[26px] shrink-0 border-b-2 border-l border-[#c8c8d4]">
        {['project', 'eyeTab', 'camera', 'res'].map(t => (
          <button key={t} aria-label={t} onClick={() => setTab(t)} className={`flex w-[38px] items-center justify-center border-r border-[#c8c8d4] ${tab === t ? 'bg-white' : 'mb-[2px] border-t border-b bg-[#ececec]'}`}>
            <Icon name={t} size="h-[17px] w-[17px]" />
          </button>
        ))}
        <span className="flex-1 border-t border-r border-[#c8c8d4]" />
      </div>
    </aside>
  );
}

/* ---------- model view ---------- */

type Pt = [number, number];
const U: Pt = [523, 73.5];
const V: Pt = [-177, 219];
const at = (u: number, v: number): Pt => [650 + U[0] * u + V[0] * v, 326 + U[1] * u + V[1] * v];
const seg = (a: Pt, b: Pt) => `M${a[0].toFixed(1)} ${a[1].toFixed(1)}L${b[0].toFixed(1)} ${b[1].toFixed(1)}`;
const range = (n: number) => Array.from({ length: n }, (_, i) => i);

const meshX = range(54).map(i => 0.045 + (i * 0.925) / 53).map(v => seg(at(0.03, v), at(0.97, v))).join('');
const meshY = range(60).map(i => 0.03 + (i * 0.94) / 59).map(u => seg(at(u, 0.045), at(u, 0.97))).join('');
const meshEdge = [0.915, 0.932, 0.95].map(v => seg(at(0.02, v), at(0.975, v))).join('')
  + [0.962, 0.976].map(u => seg(at(u, 0.02), at(u, 0.975))).join('')
  + seg(at(0.032, 0.03), at(0.032, 0.97));

const gridDots: Pt[] = [];
for (let i = -16; i < 26; i++) {
  for (let j = -16; j < 26; j++) {
    const p = at(i / 10, j / 10);
    if (p[0] > 264 && p[0] < 1397 && p[1] > 107 && p[1] < 735) gridDots.push(p);
  }
}

const T: Pt[] = [[668, 250], [1138, 317], [979, 513], [508, 447]];
const H = 74;
const faces = [[0, 1], [0, 3], [1, 2], [3, 2]];

function LoadFace({ a, b }: { a: Pt; b: Pt }) {
  return (
    <g>
      <path d={`M${a}L${b}L${b[0]} ${b[1] + H}L${a[0]} ${a[1] + H}Z`} fill="#6c7300" fillOpacity=".155" />
      <path d={`M${a[0]} ${a[1] + H}L${b[0]} ${b[1] + H}`} stroke="#8c8c00" strokeOpacity=".4" />
      <path d={`M${a}L${b}`} stroke="#8c8c00" />
      {range(10).map(i => {
        const x = a[0] + ((b[0] - a[0]) * i) / 9;
        const y = a[1] + ((b[1] - a[1]) * i) / 9;
        return (
          <g key={i}>
            <path d={`M${x} ${y}V${y + H - 7}`} stroke="#8c8c00" strokeOpacity=".55" />
            <path d={`M${x - 3.2} ${y + H - 7}H${x + 3.2}L${x} ${y + H}Z`} fill="#8c8c00" />
          </g>
        );
      })}
    </g>
  );
}

const Support = ({ x, y }: { x: number; y: number }) => (
  <path transform={`translate(${x} ${y})`} d="M-3-7L0-9 3-7 4-3 8 0 7 3 3 4 2 7-1 8-3 5-7 5-7 1-4-2Z" fill="#249a24" fillOpacity=".75" />
);

function Triad({ x, y }: { x: number; y: number }) {
  return (
    <g transform={`translate(${x} ${y})`} fontSize="11">
      <path d="M0 0V30" stroke="#000078" strokeWidth="2.5" />
      <path d="M-3.5 26H3.5L0 36Z" fill="#000078" />
      <path d="M0 0L28 3.5" stroke="#e00000" strokeWidth="2.5" />
      <path d="M27.5-.5L38 4.5 26.5 7Z" fill="#e00000" />
      <path d="M0 0L-9 10" stroke="#00e000" strokeWidth="3" />
      <path d="M-6 6L-13 10-12 16-5 12Z" fill="#00e000" />
      <circle r="3.5" fill="#f0e000" />
      <text x="44" y="11" fill="#f00000">X</text>
      <text x="-19" y="23" fill="#00e000">Y</text>
      <text x="-3" y="49" fill="#000078">Z</text>
    </g>
  );
}

const lerp = (a: Pt, b: Pt, t: number): Pt => [a[0] + (b[0] - a[0]) * t, a[1] + (b[1] - a[1]) * t];

function CubeFace({ q, fill }: { q: [Pt, Pt, Pt, Pt]; fill: string }) {
  const [a, b, c, d] = q;
  return (
    <g stroke="#7c7878" strokeWidth="1.7">
      <path d={`M${a}L${b}L${c}L${d}Z`} fill={fill} strokeWidth=".8" />
      {[0.25, 0.75].map(t => <path key={t} d={seg(lerp(a, b, t), lerp(d, c, t)) + seg(lerp(a, d, t), lerp(b, c, t))} />)}
    </g>
  );
}

function ModelView() {
  return (
    <section className="relative min-h-0 flex-1 bg-[#fdfdfd]">
      <svg viewBox="264 107 1133 628" preserveAspectRatio="xMidYMid slice" className="absolute inset-0 h-full w-full" fontFamily="'Noto Sans', sans-serif">
        <path d="M264 271L1397 431" stroke="#ececec" />
        <path d="M264 514.5L1397 675M1120 107L610 735" stroke="#b4f4f4" />
        {gridDots.map(([x, y], i) => <rect key={i} x={Math.round(x)} y={Math.round(y)} width="1" height="1" fill="#777" />)}

        <path d={`M664 323L1155 394L${at(1, 0)}L${at(1, 1)}L${at(0, 1)}L${at(0, 0)}Z`} fill="#cac8c8" />
        <g fill="none" stroke="#bd6448">
          <path d={meshX} strokeOpacity=".6" />
          <path d={meshY} strokeOpacity=".7" strokeWidth=".9" />
          <path d={meshEdge} strokeOpacity=".55" />
          <path d={seg([666, 323], [1155, 393])} strokeOpacity=".7" strokeDasharray="3 1" />
          <path d={seg([668, 326], [1155, 395.5])} strokeOpacity=".5" strokeDasharray="2 2" />
        </g>
        <path d={seg(at(0, 0), at(1, 0)) + seg(at(0, 0), at(0, 1))} stroke="#5cf25c" strokeWidth="1.2" />
        <path d={seg(at(0, 1), at(1, 1)) + seg(at(1, 0), at(1, 1))} stroke="#444" />
        <path d={seg([490, 549], [985, 619])} stroke="#bf6a50" strokeOpacity=".6" />
        <path d="M810 470L822 472 836 474M817 476L823 470 828 466M823 472L828 475" stroke="#555" strokeWidth="1.3" fill="none" />

        {range(12).map(i => <Support key={i} x={672 + i * 43.6} y={336 + i * 6.2} />)}
        {range(12).map(i => <Support key={i} x={480 + i * 14.8} y={543 - i * 18.2} />)}
        {faces.map(([a, b]) => <LoadFace key={`${a}${b}`} a={T[a]} b={T[b]} />)}
        <circle cx="668" cy="250" r="2" fill="#777" />

        <path d="M992 620H1000L1001 627 1008 630 1002 638 983 635 991 627Z" fill="#3fdc3f" />
        <circle cx="996" cy="626" r="4" fill="#10b810" />
        <g fill="#f00000"><circle cx="473" cy="544.5" r="2.3" /><circle cx="1173" cy="399.5" r="2.3" /><circle cx="996" cy="618.5" r="2.3" /></g>

        <g fontSize="10">
          <text x="668" y="243" fill="#9c9c00">3.00</text>
          <text x="661" y="314" fill="#1ea4f4">↑ 5.24 | 5.24</text>
          <text x="597" y="361" fill="#f000f0">↓ 5.24 | 5.24</text>
        </g>
        <Triad x={650} y={325} />
        <Triad x={323} y={676} />

        <CubeFace q={[[1285, 153], [1350, 163], [1350, 224], [1285, 216]]} fill="#cfcfcf" />
        <CubeFace q={[[1307, 126], [1372, 135], [1350, 163], [1285, 153]]} fill="#9c9c9c" />
        <CubeFace q={[[1350, 163], [1372, 135], [1372, 198], [1350, 224]]} fill="#8a8a8a" />
        <text x="1310" y="195" fontSize="14" fontWeight="700" fill="#3cc83c">-Y</text>
        <text transform="translate(1317 149) rotate(8) skewX(-30)" fontSize="11" fontWeight="700" fill="#40408c">+Z</text>
        <text transform="translate(1358 188) skewY(-45)" fontSize="9" fontWeight="700" fill="#c05050">X</text>
      </svg>
      <p className="relative pt-1 pl-[5px] leading-[17px]">LC2 - užitné<br />Loads [kN/m²]</p>
    </section>
  );
}

/* ---------- objects table ---------- */

const columns = ['Object Type', 'Design\nAll', 'Selected Objects', 'To Design', 'Removed from Design', 'Not Valid / Deactivated'];
const rows = [
  { type: 'Surfaces', selected: '', invalid: '' },
  { type: 'Nodes with Punching', selected: '3', invalid: '3' },
];
const sheets = ['Design Situations', 'Objects to Design', 'Ultimate Configurations', 'Nodes'];

function PageButton({ label, d }: { label: string; d: string }) {
  return (
    <button aria-label={label} className="flex h-full w-[18px] items-center justify-center">
      <svg viewBox="0 0 8 8" className="h-2 w-2"><path d={d} fill="#444" /></svg>
    </button>
  );
}

function ObjectsPanel() {
  const [sheet, setSheet] = useState('Objects to Design');
  return (
    <section className="mt-1 flex h-[287px] shrink-0 flex-col">
      <PanelTitle title="Objects to Design | Concrete Design | EN 1992 | CEN | 2014-11" />
      <div className="flex h-5 shrink-0 items-center gap-4 pt-px pl-2">
        {['Go To', 'Edit', 'Selection', 'View', 'Settings'].map(m => <button key={m}>{m}</button>)}
      </div>
      <div className="flex h-7 shrink-0 items-center">
        <div className="flex h-7 items-center border-t border-r border-[#dcdcdc] pb-[2px] pl-[2px]">
          <Combo label="Design type" value="Concrete Design" width="w-[200px]" lead={<Icon name="beam" size="h-[14px] w-[14px]" />} />
          <Step dir="left" />
          <Step dir="right" off />
          <Tools items={['|', '|']} />
          <Combo label="Table group" value="Input Data" width="w-[268px]" lead={<Icon name="tableGreen" size="h-[14px] w-[14px]" />} />
          <Step dir="left" off />
          <Step dir="right" />
          <Tools items={['||', '*syncIn', '*syncOut', '|', '*resEye', '*resDigits', '|', 'rowUndo', 'rowDel', 'rowIn', 'rowOut', '|', 'excel', '|', 'globe', '|', 'propsGray']} />
        </div>
      </div>
      <div className="flex min-h-0 flex-1 flex-col border-t-2 border-b-2 border-l border-[#c8c8d4] bg-[linear-gradient(to_right,#f7f7f7_60px,white_60px)]">
        <table className="w-full table-fixed border-separate border-spacing-0">
          <colgroup>
            <col className="w-[60px]" /><col className="w-[200px]" /><col className="w-[70px]" /><col className="w-[175px]" /><col className="w-[146px]" /><col className="w-[240px]" /><col />
          </colgroup>
          <thead>
            <tr className="h-[9px]">{range(7).map(i => <td key={i} className="h-[9px] border-r border-b border-[#f7f7f7] bg-[#e0e0e0] p-0" />)}</tr>
            <tr className="h-8">
              <td className="border-r border-b border-[#f7f7f7] bg-[#e0e0e0]" />
              {columns.map(c => (
                <th key={c} className="h-8 border-r border-b border-[#d4d4d4] bg-[#f0f0f0] p-0 pb-[2px] align-bottom leading-[13px] font-normal whitespace-pre-line last:pl-6">{c}</th>
              ))}
            </tr>
          </thead>
          <tbody className="[&_td]:h-4 [&_td]:border-r [&_td]:border-b [&_td]:border-[#d8d8d8] [&_td]:p-0 [&_td]:leading-[15px]">
            {rows.map((r, i) => (
              <tr key={r.type} className="h-4">
                <td className="bg-[#e0e0e0]" />
                <td className="bg-[#fafaf4]">
                  <div className={`h-[15px] px-[3px] ${i === 0 ? 'border border-dotted border-black leading-[14px]' : 'border-x border-transparent'}`}>{r.type}</div>
                </td>
                <td className="bg-white"><div className="flex h-[15px] items-center justify-center"><Tick id={`all-${i}`} label={`Design all: ${r.type}`} /></div></td>
                <td className="bg-white"><div className="pl-1">{r.selected}</div></td>
                <td className="bg-[#fafaf4]" />
                <td className="relative bg-white">
                  {i === 1 && (
                    <svg viewBox="0 0 144 22" className="absolute -top-[4px] left-[88px] h-[22px] w-36">
                      <path d="M2.5 12L120 11" stroke="#ec1c24" strokeWidth="5" strokeLinecap="round" /><path d="M118 .5L144 10.5 118 21.5Z" fill="#ec1c24" />
                    </svg>
                  )}
                </td>
                <td className="bg-[#fafaf4]"><div className="pl-1 text-[#f00000]">{r.invalid}</div></td>
              </tr>
            ))}
          </tbody>
        </table>
        <div className="mt-auto flex h-[15px] shrink-0 bg-[#f0f0f0]">
          <button aria-label="Scroll left" className="flex w-[17px] items-center justify-center"><svg viewBox="0 0 6 8" className="h-2 w-[6px]"><path d="M5 0L1 4 5 8" fill="none" stroke="#444" strokeWidth="1.7" /></svg></button>
          <div className="flex-1"><div className="h-full w-[57%] bg-[#cdcdcd]" /></div>
          <button aria-label="Scroll right" className="flex w-[17px] items-center justify-center"><svg viewBox="0 0 6 8" className="h-2 w-[6px]"><path d="M1 0L5 4 1 8" fill="none" stroke="#444" strokeWidth="1.7" /></svg></button>
        </div>
      </div>
      <div className="flex h-[23px] shrink-0 items-start">
        <div className="flex h-[21px] w-[125px] items-center border-r border-[#c8c8d4]">
          <PageButton label="First" d="M0 0H1.500V8H0ZM7 0V8L2 4Z" />
          <PageButton label="Previous" d="M6 0V8L2 4Z" />
          <span className="flex-1 text-center">2 of 4</span>
          <PageButton label="Next" d="M2 0V8L6 4Z" />
          <PageButton label="Last" d="M1 0V8L6 4ZM6.500 0H8V8H6.500Z" />
        </div>
        {sheets.map(s => (
          <button key={s} onClick={() => setSheet(s)} className={`border-r border-b border-[#c8c8d4] px-2 ${sheet === s ? 'h-[22px] bg-white' : 'h-[21px] bg-[#ececec]'} ${s === 'Nodes' ? 'w-[62px]' : ''}`}>{s}</button>
        ))}
      </div>
    </section>
  );
}

function StatusBar() {
  const cell = 'h-[19px] shrink-0 border-l border-[#d4d4d4] pl-1 leading-[21px]';
  return (
    <footer className="flex h-[22px] shrink-0 items-center justify-end pb-px">
      <div className="flex gap-[3px] pr-px">
        {['SNAP', 'GRID', 'LGRID', 'OSNAP'].map(s => <button key={s} className="h-[19px] border border-[#c4c4c4] border-r-white border-b-white bg-[#ececec] px-[2px] pt-px">{s}</button>)}
      </div>
      <span className={`${cell} w-[89px]`} />
      <span className={`${cell} w-[106px]`} />
      <span className={`${cell} w-[157px]`}>CS: Global XYZ</span>
      <span className={`${cell} w-[65px]`}>Plane: XY</span>
      <span className={`${cell} w-[76px]`}>X: 15.503 m</span>
      <span className={`${cell} w-[76px]`}>Y: 6.873 m</span>
      <span className={`${cell} w-[76px]`}>Z: 0.000 m</span>
      <span className={`${cell} flex w-[19px] items-end justify-end`}>
        <svg viewBox="0 0 10 10" className="h-[10px] w-[10px]"><path d="M7 1H9V3H7ZM4 4H6V6H4ZM7 4H9V6H7ZM1 7H3V9H1ZM4 7H6V9H4ZM7 7H9V9H7Z" fill="#b8b8b8" /></svg>
      </span>
    </footer>
  );
}

export default function App() {
  return (
    <div className="flex h-screen min-h-[600px] flex-col overflow-hidden border border-[#6d6d6d] bg-[#f7f7f7] font-['Noto_Sans',sans-serif] text-[11px] leading-4 text-black">
      <TitleBar />
      <MenuBar />
      <Toolbars />
      <main className="flex min-h-0 flex-1">
        <Navigator />
        <div className="ml-1 flex min-w-0 flex-1 flex-col">
          <ModelView />
          <ObjectsPanel />
        </div>
      </main>
      <StatusBar />
    </div>
  );
}
